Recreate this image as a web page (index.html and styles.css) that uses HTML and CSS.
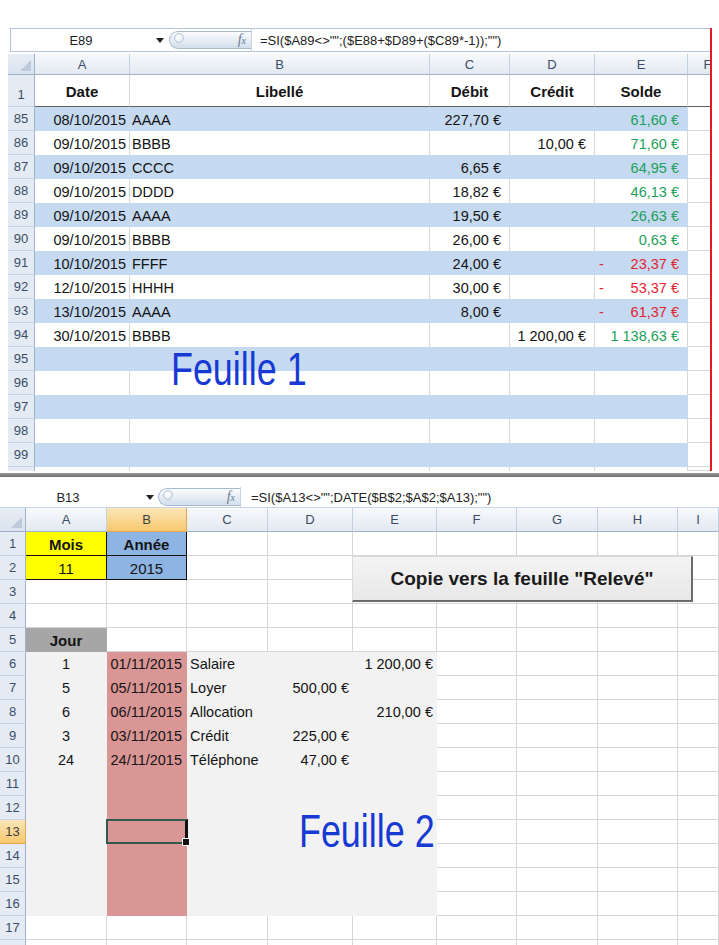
FILE: index.html
```html
<!DOCTYPE html>
<html lang="fr">
<head>
<meta charset="utf-8">
<title>Feuilles</title>
<link rel="stylesheet" href="styles.css">
</head>
<body>
<div class="page">
  <section class="sheet1">
    <div class="fbar fbar1">
      <div class="namebox">E89</div>
      <span class="dd"></span>
      <span class="grip"><span class="knob"></span><span class="fx"><i>f</i><small>x</small></span></span>
      <div class="formula">=SI($A89&lt;&gt;"";($E88+$D89+($C89*-1));"")</div>
    </div>
    <div class="g1 hrow">
      <div class="corner"></div><div class="ch">A</div><div class="ch">B</div><div class="ch">C</div><div class="ch">D</div><div class="ch">E</div><div class="ch chf">F</div>
    </div>
    <div class="g1 trow">
      <div class="rh rh-low">1</div><div class="c ctr b">Date</div><div class="c ctr b">Libellé</div><div class="c ctr b">Débit</div><div class="c ctr b">Crédit</div><div class="c ctr b">Solde</div><div class="c f"></div>
    </div>
    <div class="g1 dr bl"><div class="rh">85</div><div class="c rt dt">08/10/2015</div><div class="c lb">AAAA</div><div class="c rt cur">227,70 €</div><div class="c"></div><div class="c rt cur pos">61,60 €</div><div class="c f"></div></div>
    <div class="g1 dr"><div class="rh">86</div><div class="c rt dt">09/10/2015</div><div class="c lb">BBBB</div><div class="c"></div><div class="c rt cur">10,00 €</div><div class="c rt cur pos">71,60 €</div><div class="c f"></div></div>
    <div class="g1 dr bl"><div class="rh">87</div><div class="c rt dt">09/10/2015</div><div class="c lb">CCCC</div><div class="c rt cur">6,65 €</div><div class="c"></div><div class="c rt cur pos">64,95 €</div><div class="c f"></div></div>
    <div class="g1 dr"><div class="rh">88</div><div class="c rt dt">09/10/2015</div><div class="c lb">DDDD</div><div class="c rt cur">18,82 €</div><div class="c"></div><div class="c rt cur pos">46,13 €</div><div class="c f"></div></div>
    <div class="g1 dr bl"><div class="rh">89</div><div class="c rt dt">09/10/2015</div><div class="c lb">AAAA</div><div class="c rt cur">19,50 €</div><div class="c"></div><div class="c rt cur pos">26,63 €</div><div class="c f"></div></div>
    <div class="g1 dr"><div class="rh">90</div><div class="c rt dt">09/10/2015</div><div class="c lb">BBBB</div><div class="c rt cur">26,00 €</div><div class="c"></div><div class="c rt cur pos">0,63 €</div><div class="c f"></div></div>
    <div class="g1 dr bl"><div class="rh">91</div><div class="c rt dt">10/10/2015</div><div class="c lb">FFFF</div><div class="c rt cur">24,00 €</div><div class="c"></div><div class="c sp cur neg"><span>-</span><span>23,37 €</span></div><div class="c f"></div></div>
    <div class="g1 dr"><div class="rh">92</div><div class="c rt dt">12/10/2015</div><div class="c lb">HHHH</div><div class="c rt cur">30,00 €</div><div class="c"></div><div class="c sp cur neg"><span>-</span><span>53,37 €</span></div><div class="c f"></div></div>
    <div class="g1 dr bl"><div class="rh">93</div><div class="c rt dt">13/10/2015</div><div class="c lb">AAAA</div><div class="c rt cur">8,00 €</div><div class="c"></div><div class="c sp cur neg"><span>-</span><span>61,37 €</span></div><div class="c f"></div></div>
    <div class="g1 dr"><div class="rh">94</div><div class="c rt dt">30/10/2015</div><div class="c lb">BBBB</div><div class="c"></div><div class="c rt cur">1 200,00 €</div><div class="c rt cur pos">1 138,63 €</div><div class="c f"></div></div>
    <div class="g1 dr bl"><div class="rh">95</div><div class="c"></div><div class="c"></div><div class="c"></div><div class="c"></div><div class="c"></div><div class="c f"></div></div>
    <div class="g1 dr"><div class="rh">96</div><div class="c"></div><div class="c"></div><div class="c"></div><div class="c"></div><div class="c"></div><div class="c f"></div></div>
    <div class="g1 dr bl"><div class="rh">97</div><div class="c"></div><div class="c"></div><div class="c"></div><div class="c"></div><div class="c"></div><div class="c f"></div></div>
    <div class="g1 dr"><div class="rh">98</div><div class="c"></div><div class="c"></div><div class="c"></div><div class="c"></div><div class="c"></div><div class="c f"></div></div>
    <div class="g1 dr bl"><div class="rh">99</div><div class="c"></div><div class="c"></div><div class="c"></div><div class="c"></div><div class="c"></div><div class="c f"></div></div>
    <div class="g1 stub1"><div class="rh"></div><div class="c"></div><div class="c"></div><div class="c"></div><div class="c"></div><div class="c"></div><div class="c f"></div></div>
    <div class="label label1">Feuille 1</div>
  </section>

  <div class="sep"></div>

  <section class="sheet2">
    <div class="fbar fbar2">
      <div class="namebox">B13</div>
      <span class="dd"></span>
      <span class="grip"><span class="knob"></span><span class="fx"><i>f</i><small>x</small></span></span>
      <div class="formula">=SI($A13&lt;&gt;"";DATE($B$2;$A$2;$A13);"")</div>
    </div>
    <div class="g2 hrow2">
      <div class="corner"></div><div class="ch">A</div><div class="ch on">B</div><div class="ch">C</div><div class="ch">D</div><div class="ch">E</div><div class="ch">F</div><div class="ch">G</div><div class="ch">H</div><div class="ch">I</div>
    </div>
    <div class="g2 r"><div class="rh">1</div><div class="d yel ctr b">Mois</div><div class="d blu ctr b">Année</div><div class="d"></div><div class="d"></div><div class="d"></div><div class="d"></div><div class="d"></div><div class="d"></div><div class="d"></div></div>
    <div class="g2 r"><div class="rh">2</div><div class="d yel ctr">11</div><div class="d blu ctr">2015</div><div class="d"></div><div class="d"></div><div class="d"></div><div class="d"></div><div class="d"></div><div class="d"></div><div class="d"></div></div>
    <div class="g2 r"><div class="rh">3</div><div class="d"></div><div class="d"></div><div class="d"></div><div class="d"></div><div class="d"></div><div class="d"></div><div class="d"></div><div class="d"></div><div class="d"></div></div>
    <div class="g2 r"><div class="rh">4</div><div class="d"></div><div class="d"></div><div class="d"></div><div class="d"></div><div class="d"></div><div class="d"></div><div class="d"></div><div class="d"></div><div class="d"></div></div>
    <div class="g2 r"><div class="rh">5</div><div class="d gry ctr b">Jour</div><div class="d"></div><div class="d"></div><div class="d"></div><div class="d"></div><div class="d"></div><div class="d"></div><div class="d"></div><div class="d"></div></div>
    <div class="g2 r"><div class="rh">6</div><div class="d lg ctr">1</div><div class="d pk rt">01/11/2015</div><div class="d lg lb">Salaire</div><div class="d lg"></div><div class="d lg rt cur">1 200,00 €</div><div class="d"></div><div class="d"></div><div class="d"></div><div class="d"></div></div>
    <div class="g2 r"><div class="rh">7</div><div class="d lg ctr">5</div><div class="d pk rt">05/11/2015</div><div class="d lg lb">Loyer</div><div class="d lg rt cur">500,00 €</div><div class="d lg"></div><div class="d"></div><div class="d"></div><div class="d"></div><div class="d"></div></div>
    <div class="g2 r"><div class="rh">8</div><div class="d lg ctr">6</div><div class="d pk rt">06/11/2015</div><div class="d lg lb">Allocation</div><div class="d lg"></div><div class="d lg rt cur">210,00 €</div><div class="d"></div><div class="d"></div><div class="d"></div><div class="d"></div></div>
    <div class="g2 r"><div class="rh">9</div><div class="d lg ctr">3</div><div class="d pk rt">03/11/2015</div><div class="d lg lb">Crédit</div><div class="d lg rt cur">225,00 €</div><div class="d lg"></div><div class="d"></div><div class="d"></div><div class="d"></div><div class="d"></div></div>
    <div class="g2 r"><div class="rh">10</div><div class="d lg ctr">24</div><div class="d pk rt">24/11/2015</div><div class="d lg lb">Téléphone</div><div class="d lg rt cur">47,00 €</div><div class="d lg"></div><div class="d"></div><div class="d"></div><div class="d"></div><div class="d"></div></div>
    <div class="g2 r"><div class="rh">11</div><div class="d lg"></div><div class="d pk"></div><div class="d lg"></div><div class="d lg"></div><div class="d lg"></div><div class="d"></div><div class="d"></div><div class="d"></div><div class="d"></div></div>
    <div class="g2 r"><div class="rh">12</div><div class="d lg"></div><div class="d pk"></div><div class="d lg"></div><div class="d lg"></div><div class="d lg"></div><div class="d"></div><div class="d"></div><div class="d"></div><div class="d"></div></div>
    <div class="g2 r"><div class="rh on">13</div><div class="d lg"></div><div class="d pk sel"></div><div class="d lg"></div><div class="d lg"></div><div class="d lg"></div><div class="d"></div><div class="d"></div><div class="d"></div><div class="d"></div></div>
    <div class="g2 r"><div class="rh">14</div><div class="d lg"></div><div class="d pk"></div><div class="d lg"></div><div class="d lg"></div><div class="d lg"></div><div class="d"></div><div class="d"></div><div class="d"></div><div class="d"></div></div>
    <div class="g2 r"><div class="rh">15</div><div class="d lg"></div><div class="d pk"></div><div class="d lg"></div><div class="d lg"></div><div class="d lg"></div><div class="d"></div><div class="d"></div><div class="d"></div><div class="d"></div></div>
    <div class="g2 r"><div class="rh">16</div><div class="d lg"></div><div class="d pk"></div><div class="d lg"></div><div class="d lg"></div><div class="d lg"></div><div class="d"></div><div class="d"></div><div class="d"></div><div class="d"></div></div>
    <div class="g2 r"><div class="rh">17</div><div class="d"></div><div class="d"></div><div class="d"></div><div class="d"></div><div class="d"></div><div class="d"></div><div class="d"></div><div class="d"></div><div class="d"></div></div>
    <div class="g2 stub2"><div class="rh"></div><div class="d"></div><div class="d"></div><div class="d"></div><div class="d"></div><div class="d"></div><div class="d"></div><div class="d"></div><div class="d"></div><div class="d"></div></div>

    <div class="btn">Copie vers la feuille "Relevé"</div>
    <div class="label label2">Feuille 2</div>
  </section>
</div>
</body>
</html>
```

FILE: styles.css
```css
* { box-sizing: border-box; }

body {
  margin: 0;
  background: #fff;
  font-family: "Liberation Sans", Arial, sans-serif;
  color: #111;
}

.page {
  width: 719px;
  height: 945px;
  overflow: hidden;
  position: relative;
}

/* ---------- formula bars ---------- */
.fbar {
  display: flex;
  align-items: center;
  background: #fff;
  border: 1px solid #b3c4d9;
  font-size: 13px;
  color: #222;
}
.fbar1 { height: 24px; margin: 0 0 2px 2px; border-right: none; }
.fbar2 { height: 21px; margin-bottom: 0; border-left: none; border-right: none; border-top: none; border-bottom: 1px solid #c9d6e5; }

.namebox { text-align: center; white-space: nowrap; }
.fbar1 .namebox { width: 140px; }
.fbar2 .namebox { width: 136px; }

.dd {
  width: 0; height: 0;
  border-left: 4px solid transparent;
  border-right: 4px solid transparent;
  border-top: 5px solid #222;
}
.fbar1 .dd { margin: 0 5px 0 5px; }
.fbar2 .dd { margin: 0 4px 0 10px; }

.grip {
  display: flex;
  align-items: center;
  justify-content: space-between;
  height: 18px;
  border: 1px solid #a8bad0;
  border-right: none;
  border-radius: 10px 0 0 10px;
  background: linear-gradient(#fbfcfe, #d3dfed);
}
.fbar1 .grip { width: 82px; }
.fbar2 .grip { width: 82px; }

.knob {
  width: 10px; height: 10px;
  margin: -4px 0 0 4px;
  border-radius: 50%;
  background: radial-gradient(circle at 40% 35%, #ffffff, #dbe4ef);
  border: 1px solid #b6c5d7;
}
.fx {
  font-family: "Liberation Serif", serif;
  color: #6a7a90;
  font-size: 14px;
  margin-right: 5px;
}
.fx small { font-size: 10px; font-style: italic; }

.formula {
  flex: 1;
  height: 100%;
  display: flex;
  align-items: center;
  border-left: 1px solid #c7d3e2;
  padding-left: 8px;
  white-space: nowrap;
  font-size: 13px;
}
.fbar2 .formula { padding-left: 10px; }

/* ---------- headers ---------- */
.corner {
  position: relative;
  background: linear-gradient(#e8eef6, #d9e2ee);
  border-right: 1px solid #9fb2c9;
  border-bottom: 1px solid #9fb2c9;
}
.corner::after {
  content: "";
  position: absolute;
  right: 3px; bottom: 3px;
  border-left: 11px solid transparent;
  border-bottom: 11px solid #bccadb;
}

.ch {
  display: flex;
  align-items: center;
  justify-content: center;
  background: linear-gradient(#f7f9fc, #e3e9f2);
  border-right: 1px solid #c3d0e0;
  border-bottom: 1px solid #9fb2c9;
  color: #3b4d66;
  font-size: 13px;
}
.ch.on {
  background: linear-gradient(#fbe6b8, #f6c86e);
  border-right-color: #e2aa4f;
  border-bottom-color: #e2aa4f;
  color: #3c3c3c;
}

.rh {
  display: flex;
  align-items: center;
  justify-content: center;
  background: #e5ebf4;
  border-right: 1px solid #9fb2c9;
  border-bottom: 1px solid #c6d3e2;
  color: #3b4d66;
  font-size: 13px;
}
.rh.on {
  background: linear-gradient(#fbe6b8, #f6c86e);
  border-bottom-color: #e2aa4f;
  border-right-color: #e2aa4f;
  color: #3c3c3c;
}
.rh-low { align-items: flex-end; padding-bottom: 4px; }

/* ---------- sheet 1 ---------- */
.sheet1 {
  position: relative;
  margin: 28px 0 0 8px;
  width: 704px;
  border-right: 2px solid #e31b23;
  overflow: hidden;
}

.g1 {
  display: grid;
  grid-template-columns: 27px 95px 300px 80px 85px 93px 40px;
}
.hrow { height: 21px; }
.trow { height: 32px; }
.dr { height: 24px; }
.stub1 { height: 4px; }
.stub1 .rh { border-bottom: none; }

.c {
  display: flex;
  align-items: center;
  padding: 1px 3px 0;
  border-right: 1px solid #d6d6d6;
  font-size: 14.5px;
  white-space: nowrap;
  overflow: hidden;
  color: #141414;
}
.c.f { border-bottom: 1px solid #d6d6d6; }
.trow .c { border-bottom: 1px solid #5f5f5f; font-size: 15px; }
.bl > .c { background: #c5d9f1; border-right-color: #c5d9f1; }
.bl > .c.f { background: #fff; border-right-color: #d6d6d6; }

.ctr { justify-content: center; }
.rt { justify-content: flex-end; }
.sp { justify-content: space-between; }
.b { font-weight: bold; }
.dt { padding-right: 3px; }
.lb { padding-left: 2px; }
.cur { padding-right: 8px; }
.pos { color: #20a05a; }
.neg { color: #e3232d; }
.neg span:first-child { padding-left: 1px; }

.label {
  position: absolute;
  font-family: "Liberation Sans", Arial, sans-serif;
  font-size: 46px;
  line-height: 46px;
  color: #1739d4;
  white-space: nowrap;
  transform: scaleX(0.78);
  transform-origin: left top;
}
.label1 { left: 163px; top: 318px; }
.label2 { left: 299px; top: 331px; }

.sep {
  margin-top: 2px;
  height: 4px;
  background: linear-gradient(#9a9a9a, #6f6f6f);
}

/* ---------- sheet 2 ---------- */
.sheet2 {
  position: relative;
  padding-top: 10px;
}

.g2 {
  display: grid;
  grid-template-columns: 26px 81px 80px 81px 85px 84px 80px 81px 80px 41px;
}
.hrow2 { height: 24px; margin-top: 0; }
.r { height: 24px; }
.stub2 { height: 6px; }

.d {
  display: flex;
  align-items: center;
  padding: 1px 3px 0;
  border-right: 1px solid #d6d6d6;
  border-bottom: 1px solid #d6d6d6;
  font-size: 14.5px;
  white-space: nowrap;
  overflow: hidden;
  color: #141414;
}
.d.yel { background: #ffff00; border-right-color: #111; border-bottom-color: #111; font-size: 15px; }
.d.blu { background: #8db4e2; border-right-color: #111; border-bottom-color: #111; font-size: 15px; }
.d.gry { background: #a6a6a6; border-color: #a6a6a6; font-size: 15px; }
.d.lg { background: #f2f2f2; border-color: #f2f2f2; }
.d.pk { background: #da9694; border-color: #da9694; }
.d.pk.rt { padding-right: 4px; }

.d.sel { position: relative; overflow: visible; }
.d.sel::after {
  content: "";
  position: absolute;
  left: -1px; top: -1px; right: -2px; bottom: -1px;
  border: 2px solid #2e5b4e;
  border-right: 3px solid #111;
}
.d.sel::before {
  content: "";
  position: absolute;
  right: -4px; bottom: -3px;
  width: 6px; height: 6px;
  background: #111;
  border: 1px solid #fff;
  z-index: 2;
}

.btn {
  position: absolute;
  left: 352px;
  top: 79px;
  width: 341px;
  height: 46px;
  display: flex;
  align-items: center;
  justify-content: center;
  background: linear-gradient(#f4f4f4, #e8e8e8);
  border: 1px solid #dadada;
  border-right: 2px solid #6c6c6c;
  border-bottom: 2px solid #6c6c6c;
  font-weight: bold;
  font-size: 19px;
  color: #1a1a1a;
  white-space: nowrap;
}
```
